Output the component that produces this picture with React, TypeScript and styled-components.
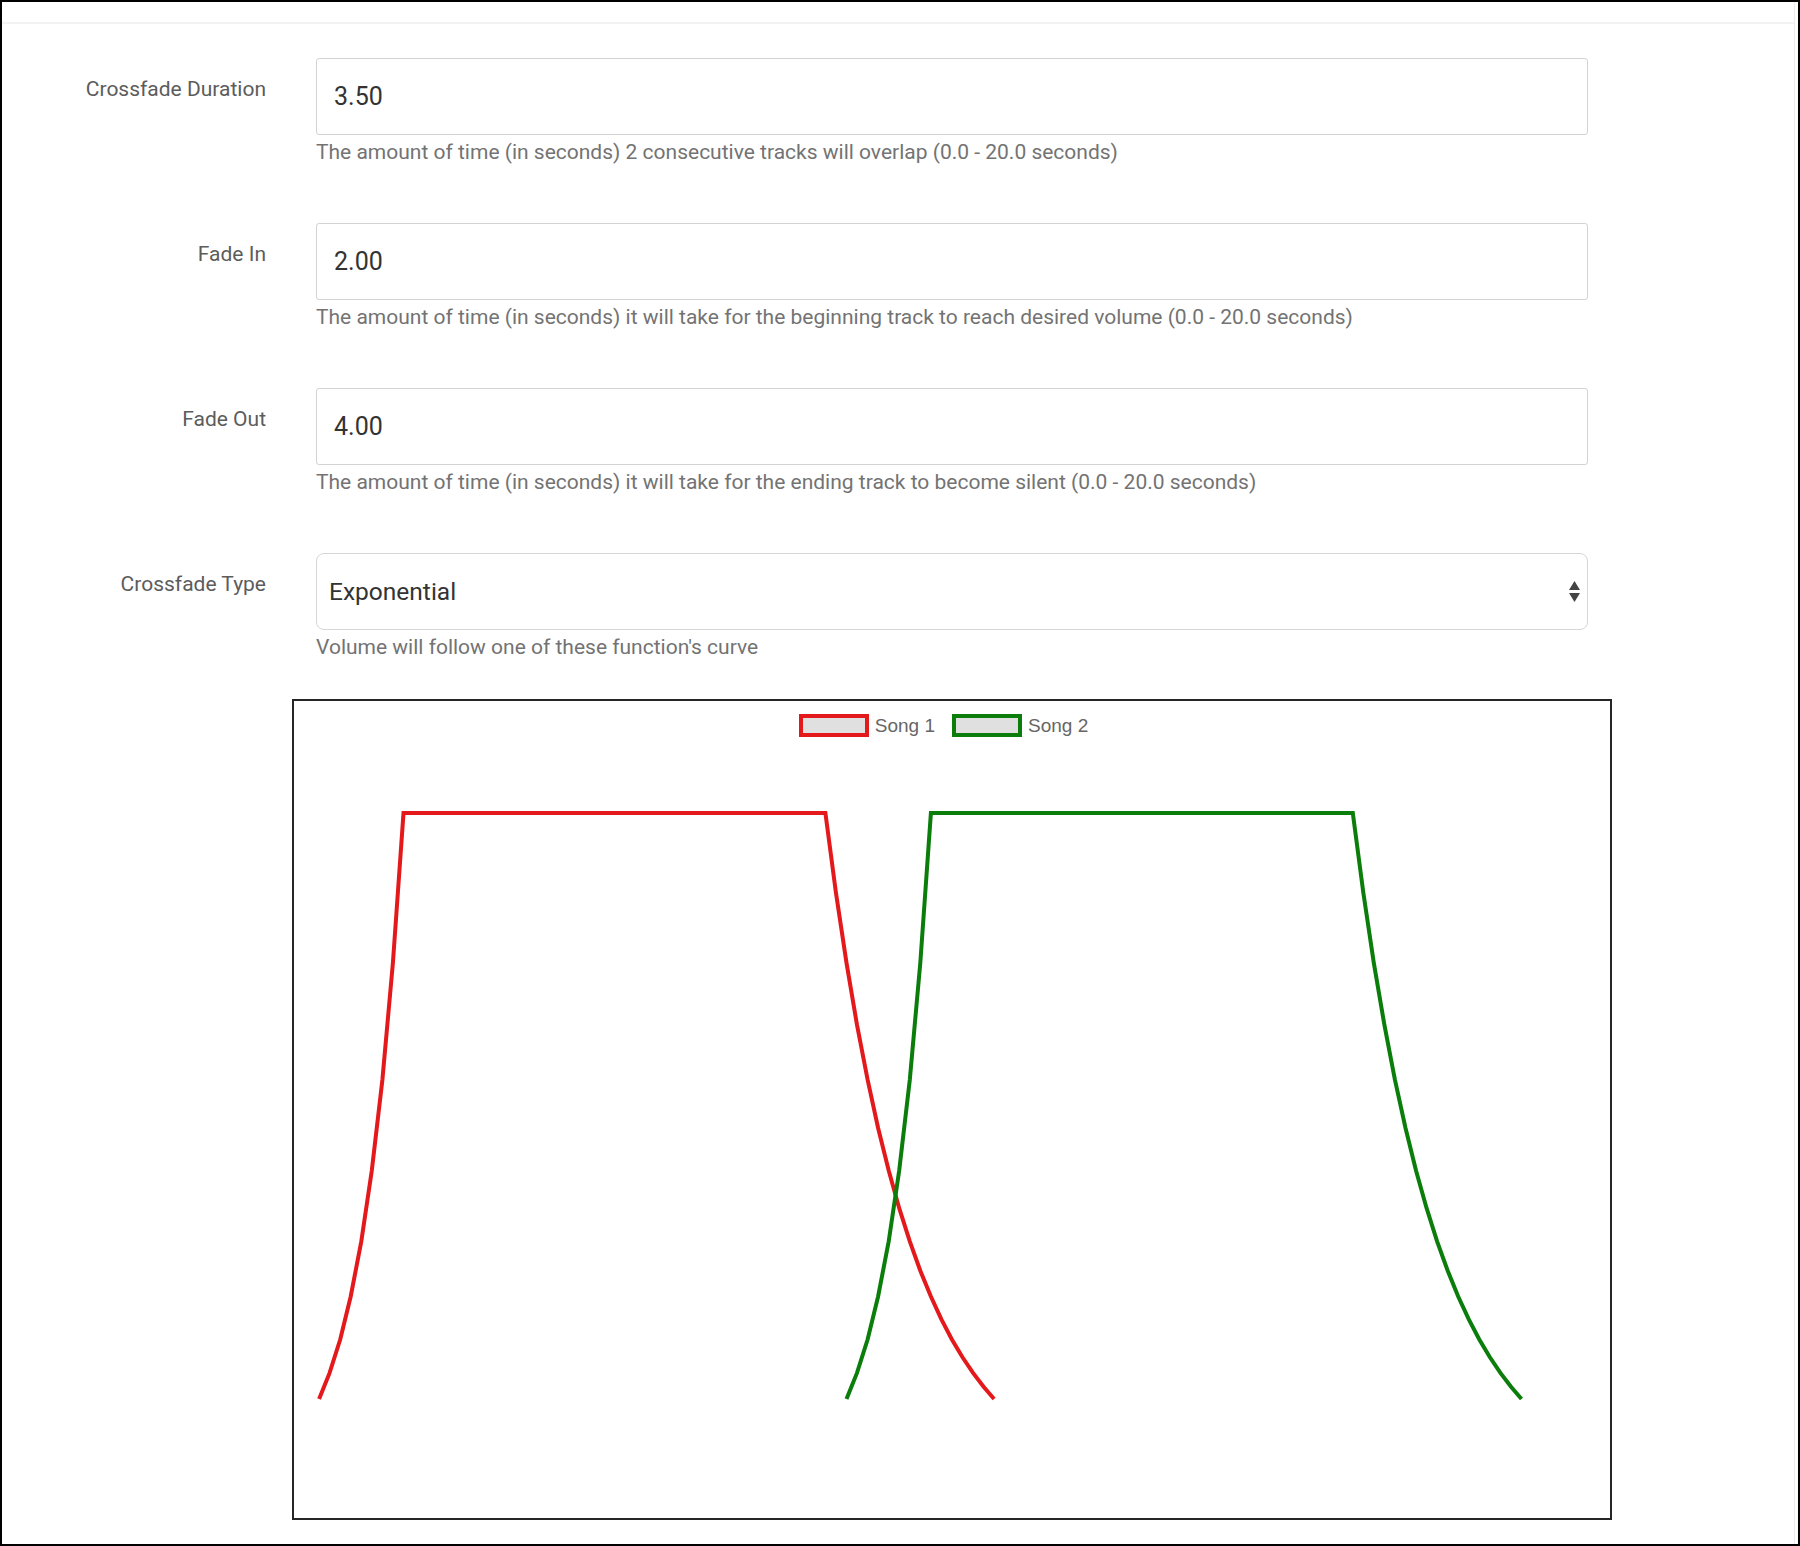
import React from "react";
import styled, { createGlobalStyle } from "styled-components";

const GlobalStyle = createGlobalStyle`
  html, body {
    margin: 0;
    padding: 0;
    background: #fff;
  }
  body {
    font-family: Roboto, "Liberation Sans", Arial, sans-serif;
  }
  * {
    box-sizing: border-box;
  }
`;

const FADE_IN = 2;
const FADE_OUT = 4;
const CROSSFADE = 3.5;
const PLATEAU = 10;
const PX_PER_SEC = 42.19;
const PLOT_TOP = 52;
const PLOT_BOTTOM = 638;
const RED_START = 25.1;

const expCurve = (x: number) => (Math.exp(2 * x) - 1) / (Math.exp(2) - 1);

function songPoints(startX: number) {
  const pts: [number, number][] = [];
  const step = 0.25;
  const yFor = (v: number) => PLOT_BOTTOM - v * (PLOT_BOTTOM - PLOT_TOP);
  for (let t = 0; t <= FADE_IN + 1e-6; t += step) {
    pts.push([startX + t * PX_PER_SEC, yFor(expCurve(t / FADE_IN))]);
  }
  const fallStart = FADE_IN + PLATEAU;
  for (let t = 0; t <= FADE_OUT + 1e-6; t += step) {
    pts.push([
      startX + (fallStart + t) * PX_PER_SEC,
      yFor(expCurve(1 - t / FADE_OUT)),
    ]);
  }
  return pts.map(([x, y]) => `${x.toFixed(1)},${y.toFixed(1)}`).join(" ");
}

const songs = [
  { name: "Song 1", color: "#e3191c", start: RED_START },
  {
    name: "Song 2",
    color: "#0b7d0b",
    start: RED_START + (FADE_IN + PLATEAU + FADE_OUT - CROSSFADE) * PX_PER_SEC,
  },
];

const fields = [
  {
    label: "Crossfade Duration",
    value: "3.50",
    help: "The amount of time (in seconds) 2 consecutive tracks will overlap (0.0 - 20.0 seconds)",
  },
  {
    label: "Fade In",
    value: "2.00",
    help: "The amount of time (in seconds) it will take for the beginning track to reach desired volume (0.0 - 20.0 seconds)",
  },
  {
    label: "Fade Out",
    value: "4.00",
    help: "The amount of time (in seconds) it will take for the ending track to become silent (0.0 - 20.0 seconds)",
  },
];

export default function App() {
  return (
    <>
      <GlobalStyle />
      <Frame>
        <Sheet>
          <TopStrip />
          <Form>
            {fields.map((f) => (
              <Row key={f.label}>
                <Label>{f.label}</Label>
                <Field>
                  <Input readOnly value={f.value} />
                  <Help>{f.help}</Help>
                </Field>
              </Row>
            ))}
            <Row>
              <Label>Crossfade Type</Label>
              <Field>
                <SelectBox>
                  <span>Exponential</span>
                  <svg width="11" height="21" viewBox="0 0 11 21">
                    <polygon points="0,9 5.5,0 11,9" fill="#444" />
                    <polygon points="0,12 11,12 5.5,21" fill="#444" />
                  </svg>
                </SelectBox>
                <Help>Volume will follow one of these function's curve</Help>
              </Field>
            </Row>
            <ChartRow>
              <ChartBox>
                <Legend>
                  {songs.map((s) => (
                    <LegendItem key={s.name}>
                      <Swatch $color={s.color} />
                      <LegendText>{s.name}</LegendText>
                    </LegendItem>
                  ))}
                </Legend>
                <svg width="1316" height="757" viewBox="0 0 1316 757">
                  {songs.map((s) => (
                    <polyline
                      key={s.name}
                      points={songPoints(s.start)}
                      fill="none"
                      stroke={s.color}
                      strokeWidth={4}
                      strokeLinejoin="miter"
                    />
                  ))}
                </svg>
              </ChartBox>
            </ChartRow>
          </Form>
        </Sheet>
      </Frame>
    </>
  );
}

const Frame = styled.div`
  width: 1800px;
  height: 1546px;
  border: 2px solid #000;
  background: #fff;
  overflow: hidden;
`;

const Sheet = styled.div`
  height: 100%;
  margin-right: 3px;
  border-right: 1px solid #ececec;
`;

const TopStrip = styled.div`
  height: 22px;
  border-bottom: 2px solid #f3f3f3;
`;

const Form = styled.div`
  padding-top: 34px;
`;

const Row = styled.div`
  display: flex;
  align-items: flex-start;
  margin-bottom: 57px;
`;

const Label = styled.div`
  width: 264px;
  flex-shrink: 0;
  padding-top: 17px;
  text-align: right;
  font-size: 21px;
  line-height: 29px;
  color: #5c5c5c;
`;

const Field = styled.div`
  margin-left: 50px;
  width: 1272px;
`;

const Input = styled.input`
  display: block;
  width: 100%;
  height: 77px;
  padding: 0 17px;
  border: 1.5px solid #d3d3d3;
  border-radius: 3px;
  font-family: Roboto, "Liberation Sans", Arial, sans-serif;
  font-size: 25px;
  color: #333;
  background: #fff;
  outline: none;
`;

const SelectBox = styled.div`
  display: flex;
  align-items: center;
  justify-content: space-between;
  height: 77px;
  padding: 0 7px 0 12px;
  border: 1.5px solid #d6d6d6;
  border-radius: 8px;
  font-size: 24.5px;
  color: #333;
  background: #fff;
`;

const Help = styled.div`
  margin-top: 3px;
  font-size: 21px;
  line-height: 28px;
  color: #737373;
`;

const ChartRow = styled.div`
  padding-left: 290px;
  margin-top: -19px;
`;

const ChartBox = styled.div`
  width: 1320px;
  height: 821px;
  border: 2px solid #262626;
  background: #fff;
`;

const Legend = styled.div`
  height: 60px;
  padding-top: 13px;
  display: flex;
  justify-content: center;
`;

const LegendItem = styled.div`
  display: flex;
  align-items: center;
  height: 23px;
  margin-right: 17px;
`;

const Swatch = styled.div<{ $color: string }>`
  width: 70px;
  height: 23px;
  border: 4px solid ${(p) => p.$color};
  background: #e0e0e0;
`;

const LegendText = styled.span`
  margin-left: 6px;
  font-family: "Liberation Sans", Arial, sans-serif;
  font-size: 19px;
  color: #666;
`;
